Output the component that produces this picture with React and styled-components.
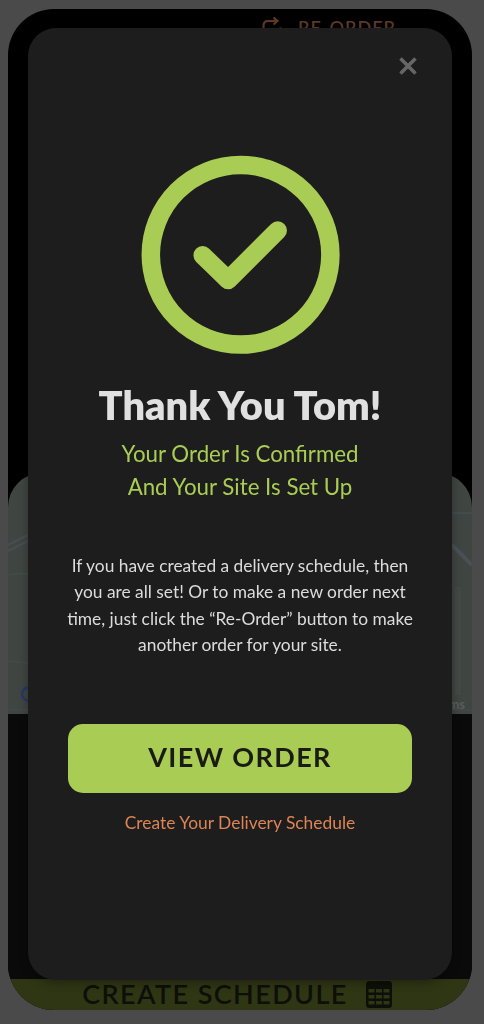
import React from 'react';
import styled, { createGlobalStyle } from 'styled-components';

const GlobalStyle = createGlobalStyle`
  html, body {
    margin: 0;
    padding: 0;
    background: #4a4a4a;
    font-family: Lato, 'Open Sans', sans-serif;
  }
`;

const Page = styled.div`
  position: relative;
  width: 484px;
  height: 1024px;
  padding: 9px 12px 14px 8px;
  box-sizing: border-box;
  overflow: hidden;
`;

const Phone = styled.div`
  height: 100%;
  display: flex;
  flex-direction: column;
  background: #000;
  border-radius: 46px;
  overflow: hidden;
`;

const TopBar = styled.div`
  height: 464px;
  flex: none;
  display: flex;
  justify-content: flex-end;
  align-items: flex-start;
  gap: 14px;
  padding: 8px 76px 0 0;
  box-sizing: border-box;
  color: #5c3a26;
`;

const ReorderLabel = styled.span`
  font-size: 18px;
  line-height: 20px;
  font-weight: 600;
  letter-spacing: 1px;
`;

const MapCard = styled.div`
  position: relative;
  height: 241px;
  flex: none;
  background: #3f4540;
  border-radius: 34px 34px 0 0;
  overflow: hidden;
`;

const MapLines = styled.svg`
  display: block;
  width: 100%;
  height: 100%;
`;

const MapTerms = styled.span`
  position: absolute;
  right: 7px;
  bottom: 2px;
  font-size: 13px;
  line-height: 16px;
  font-weight: 700;
  color: #5c5c5c;
`;

const BlackBand = styled.div`
  flex: 1;
  background: #0a0a0a;
`;

const ScheduleBar = styled.div`
  height: 31px;
  flex: none;
  display: flex;
  align-items: center;
  justify-content: center;
  gap: 18px;
  padding: 0 6px 1px 0;
  box-sizing: border-box;
  background: #2f3614;
  color: #0d0f08;
`;

const ScheduleLabel = styled.span`
  font-size: 27px;
  line-height: 30px;
  font-weight: 600;
  letter-spacing: 1.4px;
`;

const Modal = styled.div`
  position: absolute;
  left: 28px;
  top: 28px;
  width: 424px;
  height: 952px;
  display: flex;
  flex-direction: column;
  align-items: center;
  padding-top: 127px;
  box-sizing: border-box;
  background: #1d1d1d;
  border-radius: 28px;
  box-shadow: 0 3px 10px rgba(0, 0, 0, 0.3);
  text-align: center;
  will-change: transform;
`;

const CloseButton = styled.button`
  position: absolute;
  top: 26.5px;
  right: 33px;
  width: 22px;
  height: 22px;
  padding: 0;
  border: 0;
  background: none;
  color: #666;
`;

const Title = styled.h1`
  margin: 24px 0 0;
  font-size: 39.7px;
  line-height: 52px;
  font-weight: 800;
  color: #e0e0e0;
`;

const Subtitle = styled.p`
  margin: 6px 0 0;
  font-size: 22.3px;
  line-height: 33px;
  font-weight: 400;
  color: #a9cd54;
`;

const Body = styled.p`
  width: 368px;
  margin: 50px 0 0;
  font-size: 17.35px;
  line-height: 26.4px;
  color: #dcdcdc;
`;

const ViewOrder = styled.button`
  width: 344px;
  height: 69px;
  margin-top: 65px;
  padding: 0 0 3px;
  border: 0;
  border-radius: 15px;
  background: #a9cd54;
  color: #1a1c14;
  font-family: inherit;
  font-size: 27px;
  font-weight: 700;
  letter-spacing: 1.4px;
`;

const ScheduleLink = styled.a`
  margin-top: 18px;
  font-size: 17.4px;
  line-height: 24px;
  color: #dd8555;
`;

const CheckCircle = () => (
  <svg width="200" height="200" viewBox="0 0 200 200" fill="none">
    <circle cx="100.6" cy="99.8" r="89.8" stroke="#a9cd54" strokeWidth="18.5" />
    <path
      d="M62.7 100.3 L88.2 125 L137.7 75.5"
      stroke="#a9cd54"
      strokeWidth="18.5"
      strokeLinecap="round"
      strokeLinejoin="round"
    />
  </svg>
);

const CloseIcon = () => (
  <svg width="22" height="22" viewBox="0 0 22 22" fill="none">
    <path d="M3.5 3.5 L18.5 18.5 M18.5 3.5 L3.5 18.5" stroke="currentColor" strokeWidth="3.6" />
  </svg>
);

const RepeatIcon = () => (
  <svg width="22" height="24" viewBox="0 0 22 24" fill="none" stroke="currentColor" strokeWidth="2.2">
    <path d="M1.5 11 V8.5 Q1.5 4 6 4 H15.5 M11.5 0.5 L15.5 4 L11.5 7.5" />
    <path d="M18.5 10.5 V15 Q18.5 18 15 18 H6" />
  </svg>
);

const CalendarIcon = () => (
  <svg width="26" height="27" viewBox="0 0 26 27">
    <rect width="26" height="27" rx="3.5" fill="currentColor" />
    <g fill="#2f3614">
      {[8, 14, 20].flatMap(y =>
        [2.5, 10, 17.5].map(x => <rect key={`${x}-${y}`} x={x} y={y} width="6" height="3.5" rx="0.5" />)
      )}
    </g>
  </svg>
);

const App = () => (
  <>
    <GlobalStyle />
    <Page>
      <Phone>
        <TopBar>
          <RepeatIcon />
          <ReorderLabel>RE-ORDER</ReorderLabel>
        </TopBar>
        <MapCard>
          <MapLines viewBox="0 0 464 241" fill="none">
            <path d="M0 72 L20 62 M0 78 L20 68" stroke="#474d50" strokeWidth="2.5" />
            <path d="M0 102 Q10 100 20 101" stroke="#45504e" strokeWidth="1" />
            <path d="M0 188 L20 190" stroke="#484d4a" />
            <path d="M444 40 H464" stroke="#48525c" />
            <path d="M444 72 L464 92" stroke="#4a5053" strokeWidth="4" />
            <path d="M450 114 V222" stroke="#454945" strokeWidth="6" />
            <circle cx="20.5" cy="221" r="6.5" stroke="#26386a" strokeWidth="2.5" />
            <path d="M0 237 H464" stroke="#484c49" />
          </MapLines>
          <MapTerms>Terms</MapTerms>
        </MapCard>
        <BlackBand />
        <ScheduleBar>
          <ScheduleLabel>CREATE SCHEDULE</ScheduleLabel>
          <CalendarIcon />
        </ScheduleBar>
      </Phone>
      <Modal>
        <CloseButton aria-label="Close">
          <CloseIcon />
        </CloseButton>
        <CheckCircle />
        <Title>Thank You Tom!</Title>
        <Subtitle>
          Your Order Is Confirmed
          <br />
          And Your Site Is Set Up
        </Subtitle>
        <Body>
          If you have created a delivery schedule, then you are all set! Or to make a new order next
          time, just click the “Re-Order” button to make another order for your site.
        </Body>
        <ViewOrder>VIEW ORDER</ViewOrder>
        <ScheduleLink>Create Your Delivery Schedule</ScheduleLink>
      </Modal>
    </Page>
  </>
);

export default App;
